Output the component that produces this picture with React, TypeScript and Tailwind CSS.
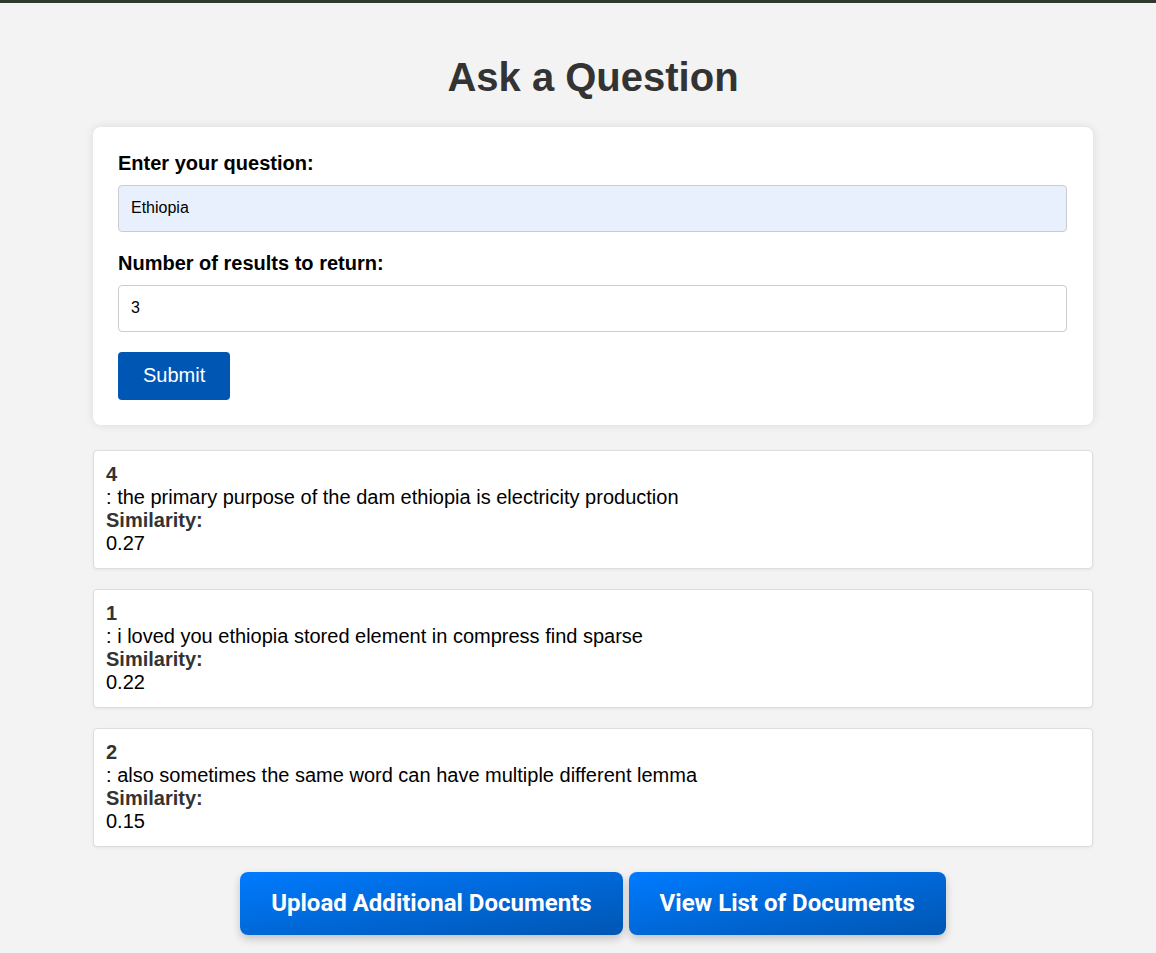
import React from "react";

// Result rows shown under the form
const results = [
  { id: "4", text: "the primary purpose of the dam ethiopia is electricity production", similarity: "0.27" },
  { id: "1", text: "i loved you ethiopia stored element in compress find sparse", similarity: "0.22" },
  { id: "2", text: "also sometimes the same word can have multiple different lemma", similarity: "0.15" },
];

const App = () => {
  return (
    <div className="min-h-screen border-t-[3px] border-[#2e3a2c] bg-[#f3f3f3] font-['Liberation_Sans',Arial,sans-serif]">
      <div className="flex justify-center pl-[30px]">
        <div className="w-[1000px]">
          <h1 className="mt-[51px] mb-[27px] text-center text-[40px] leading-[46px] font-bold text-[#333]">
            Ask a Question
          </h1>

          {/* Question form */}
          <form
            className="rounded-lg bg-white p-[25px] shadow-[0_0_10px_rgba(0,0,0,0.1)]"
            onSubmit={(e) => e.preventDefault()}
          >
            <label className="block text-[20px] leading-[23px] font-bold text-black">
              Enter your question:
            </label>
            <input
              defaultValue="Ethiopia"
              className="mt-[10px] block h-[47px] w-[949px] rounded-[4px] border border-[#ccc] bg-[#e8f0fe] px-3 pb-[2px] text-[16px] text-black outline-none"
            />
            <label className="mt-[20px] block text-[20px] leading-[23px] font-bold text-black">
              Number of results to return:
            </label>
            <input
              defaultValue="3"
              className="mt-[10px] block h-[47px] w-[949px] rounded-[4px] border border-[#ccc] bg-white px-3 pb-[2px] text-[16px] text-black outline-none"
            />
            <button
              type="submit"
              className="mt-[20px] block h-[48px] rounded-[4px] bg-[#0056b3] px-[25px] pb-[2px] text-[20px] text-white"
            >
              Submit
            </button>
          </form>

          {/* Results */}
          <div className="mt-[25px] flex flex-col gap-[20px]">
            {results.map((r) => (
              <div
                key={r.id}
                className="rounded-[4px] border border-[#ddd] bg-white px-3 pt-[12px] pb-[13px] text-[20px] leading-[23px] text-black shadow-[0_1px_3px_rgba(0,0,0,0.06)]"
              >
                <strong className="block text-[#333]">{r.id}</strong>
                <span className="block">: {r.text}</span>
                <strong className="block text-[#333]">Similarity:</strong>
                <span className="block">{r.similarity}</span>
              </div>
            ))}
          </div>

          {/* Bottom actions */}
          <div className="mt-[25px] flex justify-center gap-[6px] pb-[18px]">
            <button className="h-[63px] rounded-lg bg-gradient-to-br from-[#007bff] to-[#0056b3] px-[31px] pb-[2px] font-['Roboto',sans-serif] text-[24px] font-bold text-white shadow-[0_4px_8px_rgba(0,0,0,0.2)]">
              Upload Additional Documents
            </button>
            <button className="h-[63px] rounded-lg bg-gradient-to-br from-[#007bff] to-[#0056b3] px-[31px] pb-[2px] font-['Roboto',sans-serif] text-[24px] font-bold text-white shadow-[0_4px_8px_rgba(0,0,0,0.2)]">
              View List of Documents
            </button>
          </div>
        </div>
      </div>
    </div>
  );
};

export default App;
